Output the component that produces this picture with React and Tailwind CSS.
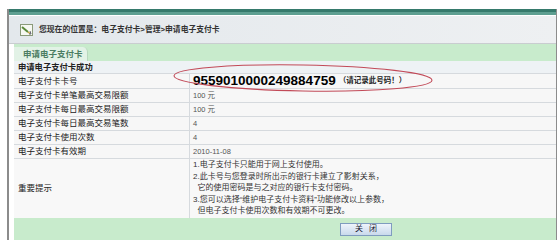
const rows = [
  { label: "电子支付卡单笔最高交易限额", value: "100 元" },
  { label: "电子支付卡每日最高交易限额", value: "100 元" },
  { label: "电子支付卡每日最高交易笔数", value: "4" },
  { label: "电子支付卡使用次数", value: "4" },
  { label: "电子支付卡有效期", value: "2010-11-08" },
];

const notes = [
  "1.电子支付卡只能用于网上支付使用。",
  "2.此卡号与您登录时所出示的银行卡建立了影射关系，",
  "\u00a0\u00a0它的使用密码是与之对应的银行卡支付密码。",
  "3.您可以选择“维护电子支付卡资料”功能修改以上参数，",
  "\u00a0\u00a0但电子支付卡使用次数和有效期不可更改。",
];

const font = "font-['Liberation_Sans','Noto_Sans_CJK_SC',sans-serif]";

const NoteIcon = () => (
  <svg width="14" height="12" viewBox="0 0 14 12">
    <rect x="0.5" y="0.5" width="12" height="11" fill="#f6f8f2" stroke="#8a9a7a" />
    <path d="M2 3 L8 8" stroke="#5a8a3a" strokeWidth="2" />
    <path d="M8 8 L10 9.5" stroke="#c8a040" strokeWidth="1.5" />
    <path d="M10 7 L11 10 L9 10" stroke="#445" strokeWidth="0.8" fill="none" />
  </svg>
);

export default function App() {
  return (
    <div className={`w-[560px] h-[248px] bg-white pt-[9px] pl-[7px] ${font}`}>
      <div className="w-[550px] h-[231px] border-l-2 border-r border-[#8c8c8c] flex flex-col">
        {/* top bar */}
        <div className="h-[6px] bg-[#5e9f91] border-t-[3px] border-[#367a6c]" />

        {/* breadcrumb */}
        <div className="h-[29px] flex items-center gap-[5px] pl-[11px] bg-gradient-to-r from-[#e3e8ec] to-[#eef0f2] border-t border-white border-b border-b-[#c9cdd0]">
          <NoteIcon />
          <span className="text-[7.8px] font-bold text-[#333]">
            您现在的位置是：电子支付卡&gt;管理&gt;申请电子支付卡
          </span>
        </div>

        <div className="pl-[5px] flex-1 flex flex-col">
          {/* tab bar */}
          <div className="h-[17px] bg-[#c8ebcc] flex items-end">
            <div className="h-[14px] w-[74px] bg-[#e2f2e6] rounded-tr-[5px] border-r border-[#b8d8be] flex items-center pl-[9px] text-[8.5px] font-bold text-[#4b7d62]">
              申请电子支付卡
            </div>
          </div>

          {/* table */}
          <div className="relative">
            <div className="h-[13px] bg-[#eef2f5] border-b border-[#d6dade] flex items-center pl-[4px] text-[8.3px] font-bold text-[#222]">
              申请电子支付卡成功
            </div>
            <div className="grid grid-cols-[176px_1fr] h-[15px] border-b border-[#d6dade] bg-[#f7f7f7]">
              <div className="border-r border-[#d6dade] pl-[4px] flex items-center text-[8.5px] text-[#222]">
                电子支付卡卡号
              </div>
              <div className="pl-[3px] flex items-center gap-[3px]">
                <span className="text-[13.5px] font-bold text-black leading-none">9559010000249884759</span>
                <span className="text-[7.5px] font-bold text-[#222]">（请记录此号码！）</span>
              </div>
            </div>
            {rows.map((r) => (
              <div key={r.label} className="grid grid-cols-[176px_1fr] h-[14px] border-b border-[#d6dade] bg-[#f7f7f7]">
                <div className="border-r border-[#d6dade] pl-[4px] flex items-center text-[8.5px] text-[#222]">
                  {r.label}
                </div>
                <div className="pl-[3px] flex items-center text-[7.5px] text-[#555]">{r.value}</div>
              </div>
            ))}
            <div className="grid grid-cols-[176px_1fr] h-[59px] bg-[#f8f8f8]">
              <div className="border-r border-[#d6dade] pl-[4px] flex items-center text-[8.5px] text-[#222]">
                重要提示
              </div>
              <div className="pl-[3px] text-[8px] leading-[11.5px] text-[#333]">
                {notes.map((n) => (
                  <div key={n} className="whitespace-pre">{n}</div>
                ))}
              </div>
            </div>

            {/* highlight ring */}
            <svg className="absolute left-[158px] top-[2px] rotate-[1deg]" width="262" height="30" viewBox="0 0 262 30">
              <ellipse cx="131" cy="15" rx="129" ry="13" fill="none" stroke="#c24a58" strokeWidth="1.1" />
            </svg>
          </div>

          {/* footer */}
          <div className="flex-1 bg-[#c8ebcc] grid grid-cols-[176px_1fr]">
            <div />
            <div className="flex items-center pl-[150px]">
              <button className="w-[52px] h-[13px] border border-[#7f9cbf] bg-gradient-to-b from-[#eef4fb] to-[#c9d9ec] text-[8px] text-[#223] flex items-center justify-center tracking-[6px] pl-[6px]">
                关闭
              </button>
            </div>
          </div>
        </div>
      </div>
    </div>
  );
}
